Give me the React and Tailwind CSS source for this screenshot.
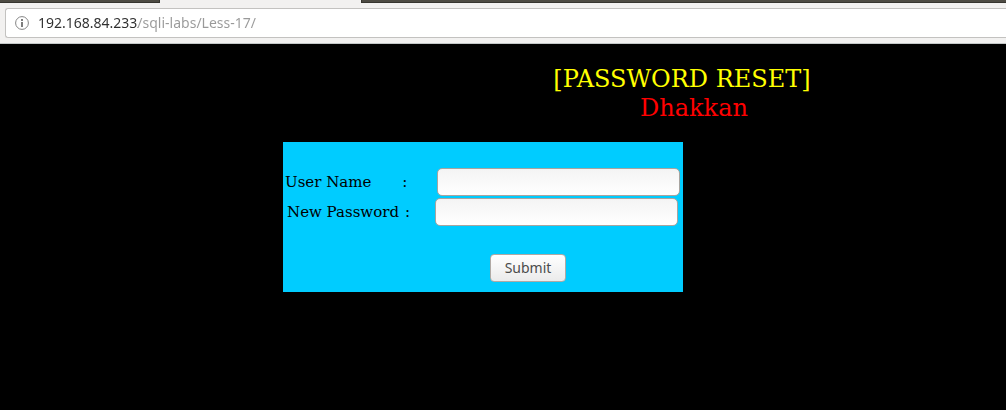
function InfoIcon() {
  return (
    <svg viewBox="0 0 14 14" className="size-[14px] shrink-0" fill="none" aria-hidden="true">
      <circle cx="7" cy="7" r="6.4" stroke="#858585" strokeWidth="1" />
      <path d="M6 3h2v2H6zM6 6h2v5H6z" fill="#7d7d7d" />
    </svg>
  );
}

function BrowserBar() {
  return (
    <header>
      <div className="flex h-[3px] bg-[#f2f1f0]">
        <div className="w-40 border-r border-b border-[#36352f] bg-[#4d4b43]" />
        <div className="w-[201px]" />
        <div className="flex-1 border-b border-l border-[#36352f] bg-[#4d4b43]" />
      </div>
      <div className="border-b border-[#c4c8c8] bg-[#f2f1f0] pt-[5px] pb-[5px] pl-[5px]">
        <div className="flex h-[30px] items-center gap-[9px] rounded-l-[3px] border border-r-0 border-[#c3c2c0] bg-white pl-[9px]">
          <InfoIcon />
          <input
            type="text"
            aria-label="Address"
            defaultValue="192.168.84.233/sqli-labs/Less-17/"
            className="min-w-0 flex-1 bg-[linear-gradient(90deg,#2e2e2e_100px,#999999_100px)] bg-clip-text font-['Noto_Sans',sans-serif] text-[14px] leading-5 text-transparent caret-black outline-none"
          />
        </div>
      </div>
    </header>
  );
}

function Field({ id, label, type, className, labelClass }) {
  return (
    <div className={className}>
      <label htmlFor={id} className={labelClass}>
        <span>{label}</span>
        <span>:</span>
      </label>
      <input
        id={id}
        type={type}
        className="h-7 w-[243px] rounded-[5px] border border-[#a8a4a0] bg-linear-to-b from-[#f4f4f4] to-white px-2 text-[15px] outline-none"
      />
    </div>
  );
}

export default function App() {
  return (
    <div className="flex min-h-screen flex-col bg-black font-['DejaVu_Serif',serif]">
      <BrowserBar />
      <main className="flex flex-col items-center pt-[21px] pr-10">
        <h1 className="pl-[398px] text-center text-[24px] leading-[29px] text-[#ffff00]">
          [PASSWORD RESET]
          <span className="block pl-6 text-[#ff0000]">Dhakkan</span>
        </h1>
        <form
          onSubmit={(e) => e.preventDefault()}
          className="mt-[19px] flex w-[400px] flex-col bg-[#00ccff] pt-[26px] pb-[10px] text-[15px] leading-[18px] text-black"
        >
          <Field
            id="uname"
            label="User Name"
            type="text"
            className="flex items-center justify-between pr-[3px] pl-[2px]"
            labelClass="flex gap-[31px]"
          />
          <Field
            id="passwd"
            label="New Password"
            type="password"
            className="mt-[2px] flex items-center justify-between pr-[5px] pl-1"
            labelClass="flex gap-[6px]"
          />
          <button
            type="submit"
            className="mt-7 ml-[207px] h-7 w-[76px] rounded-[4px] border border-[#b0a9a4] bg-linear-to-b from-white to-[#ebebeb] font-['Noto_Sans',sans-serif] text-[14px] text-[#4c4c4c]"
          >
            Submit
          </button>
        </form>
      </main>
    </div>
  );
}
